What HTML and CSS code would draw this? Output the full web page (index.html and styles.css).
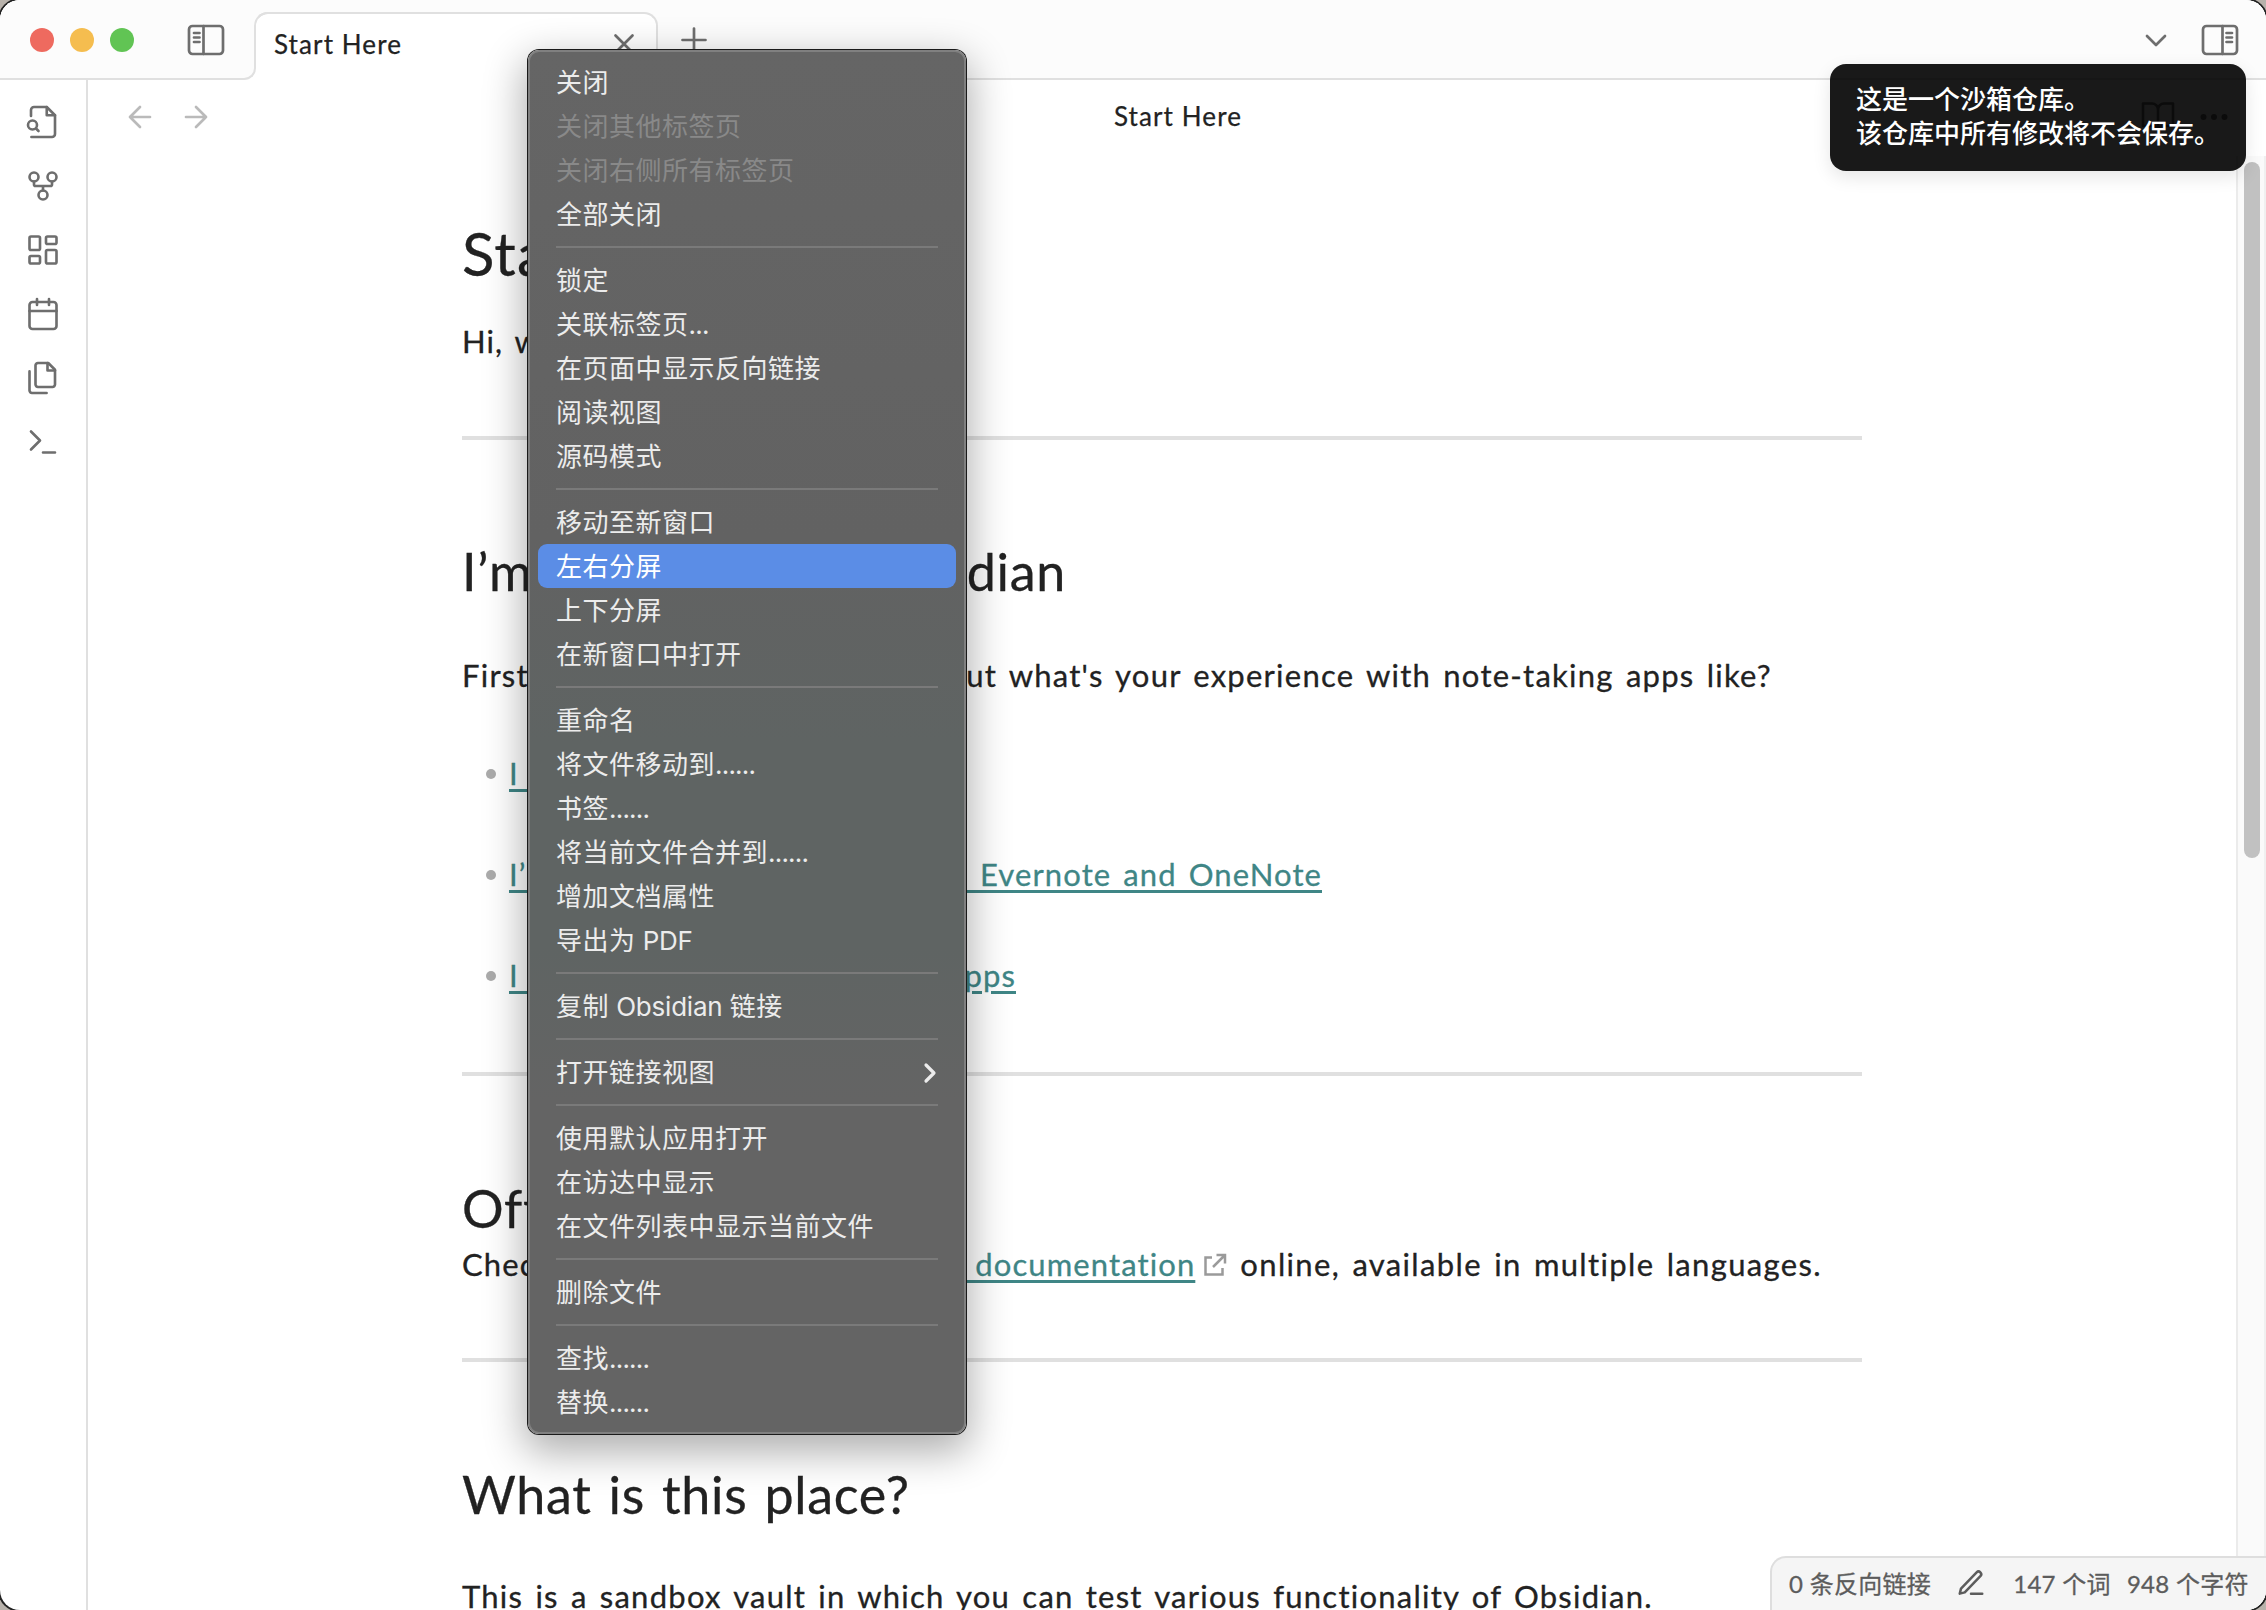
FILE: index.html
```html
<!DOCTYPE html>
<html lang="zh-CN">
<head>
<meta charset="utf-8">
<title>Start Here</title>
<link rel="stylesheet" href="styles.css">
</head>
<body>
<div class="window">
  <header class="titlebar">
    <div class="titlebar-left">
      <i class="light red"></i><i class="light yellow"></i><i class="light green"></i>
      <svg class="icon panel-left" width="40" height="34" viewBox="0 0 40 34"><rect x="3" y="3" width="34" height="28" rx="3.5"/><path d="M17.500 3v28M8 10h5.500M8 14.500h5.500M8 19h5.500"/></svg>
    </div>
    <div class="tab">
      <span class="tab-title">Start Here</span>
      <svg class="icon" width="24" height="24" viewBox="0 0 24 24"><path d="M3.500 3.500l17 17M20.500 3.500l-17 17"/></svg>
    </div>
    <div class="titlebar-right">
      <svg class="icon" width="28" height="28" viewBox="0 0 28 28"><path d="M14 2.500v23M2.500 14h23"/></svg>
      <span class="spacer"></span>
      <svg class="icon chevron" width="28" height="28" viewBox="0 0 28 28"><path d="M5 10l9 9 9-9"/></svg>
      <svg class="icon" width="40" height="34" viewBox="0 0 40 34"><rect x="3" y="3" width="34" height="28" rx="3.500"/><path d="M22.500 3v28M26.500 10h5.500M26.500 14.500h5.500M26.500 19h5.500"/></svg>
    </div>
  </header>
  <div class="main">
    <nav class="ribbon">
      <svg class="icon" width="36" height="36" viewBox="0 0 24 24"><path d="M14.500 2v5.500H20"/><path d="M4.270 22H18a2 2 0 0 0 2-2V7.500L14.500 2H6a2 2 0 0 0-2 2v4"/><circle cx="5" cy="14" r="3"/><path d="M9 18l-1.500-1.500"/></svg>
      <svg class="icon" width="36" height="36" viewBox="0 0 24 24"><circle cx="12" cy="18" r="3"/><circle cx="6" cy="6" r="3"/><circle cx="18" cy="6" r="3"/><path d="M18 9v2c0 .6-.4 1-1 1H7c-.6 0-1-.4-1-1V9M12 12v3"/></svg>
      <svg class="icon" width="36" height="36" viewBox="0 0 24 24"><rect width="7" height="9" x="3" y="3" rx="1"/><rect width="7" height="5" x="14" y="3" rx="1"/><rect width="7" height="9" x="14" y="12" rx="1"/><rect width="7" height="5" x="3" y="16" rx="1"/></svg>
      <svg class="icon" width="36" height="36" viewBox="0 0 24 24"><rect width="18" height="18" x="3" y="4" rx="2"/><path d="M16 2v4M8 2v4M3 10h18"/></svg>
      <svg class="icon" width="36" height="36" viewBox="0 0 24 24"><path d="M15.500 2H8.600c-.4 0-.8.2-1.100.5-.3.3-.5.7-.5 1.100v12.800c0 .4.2.8.5 1.100.3.3.7.5 1.100.5h9.800c.4 0 .8-.2 1.100-.5.3-.3.5-.7.5-1.100V6.500L15.500 2z"/><path d="M3 7.600v12.800c0 .4.2.8.5 1.100.3.3.7.5 1.100.5h9.800M15 2v5h5"/></svg>
      <svg class="icon" width="36" height="36" viewBox="0 0 24 24"><path d="M4 17l6-6-6-6M12 19h8"/></svg>
    </nav>
    <section class="view">
      <div class="view-header">
        <div class="view-nav">
          <svg class="icon" width="28" height="28" viewBox="0 0 28 28"><path d="M24 14H4M14 4L4 14l10 10"/></svg>
          <svg class="icon" width="28" height="28" viewBox="0 0 28 28"><path d="M4 14h20M14 4l10 10-10 10"/></svg>
        </div>
        <span class="view-title">Start Here</span>
        <div class="view-actions">
          <svg class="icon" width="36" height="36" viewBox="0 0 24 24"><path d="M2 3h6a4 4 0 0 1 4 4v14a3 3 0 0 0-3-3H2zM22 3h-6a4 4 0 0 0-4 4v14a3 3 0 0 1 3-3h7z"/></svg>
          <svg class="icon dots" width="36" height="36" viewBox="0 0 24 24"><circle cx="5" cy="12" r="1"/><circle cx="12" cy="12" r="1"/><circle cx="19" cy="12" r="1"/></svg>
        </div>
      </div>
      <div class="scroller">
        <article class="note">
          <h1>Start</h1>
          <p class="greeting">Hi, we</p>
          <hr>
          <h2 class="row w-interest"><span>I’m</span><span>Obsidian</span></h2>
          <p class="row w-first"><span>First</span><span>but what's your experience with note-taking apps like?</span></p>
          <ul>
            <li><a class="row w-one"><span>I have</span></a></li>
            <li><a class="row w-two"><span>I’m</span><span>like Evernote and OneNote</span></a></li>
            <li><a class="row w-three"><span>I have</span><span>apps</span></a></li>
          </ul>
          <hr>
          <h2 class="official">Offi</h2>
          <p class="row w-check"><span>Check</span><span class="docs"><a>the documentation</a><svg class="ext" width="26" height="26" viewBox="0 0 26 26"><path d="M10 5.500H3.500v17h17V16M14.500 3h8.500v8.500M23 3L11 15"/></svg><span class="after-link">online, available in multiple languages.</span></span></p>
          <hr>
          <h2 class="place">What is this place?</h2>
          <p class="sandbox">This is a sandbox vault in which you can test various functionality of Obsidian.</p>
        </article>
        <div class="scrollbar"><div class="thumb"></div></div>
      </div>
    </section>
  </div>

  <footer class="status">
    <span class="s-links">0 条反向链接</span>
    <svg class="icon" width="30" height="30" viewBox="0 0 24 24"><path d="M12 20.500h9M16.500 3.500a2.120 2.120 0 0 1 3 3L7 19.500l-4 1 1-4z"/></svg>
    <span class="s-words">147 个词</span>
    <span class="s-chars">948 个字符</span>
  </footer>

  <div class="notice">这是一个沙箱仓库。<br>该仓库中所有修改将不会保存。</div>

  <ul class="menu">
    <li>关闭</li>
    <li class="disabled">关闭其他标签页</li>
    <li class="disabled">关闭右侧所有标签页</li>
    <li>全部关闭</li>
    <li class="sep"></li>
    <li>锁定</li>
    <li><span>关联标签页<span class="ellipsis">...</span></span></li>
    <li>在页面中显示反向链接</li>
    <li>阅读视图</li>
    <li>源码模式</li>
    <li class="sep"></li>
    <li>移动至新窗口</li>
    <li class="active">左右分屏</li>
    <li>上下分屏</li>
    <li>在新窗口中打开</li>
    <li class="sep"></li>
    <li>重命名</li>
    <li><span>将文件移动到<span class="ellipsis">......</span></span></li>
    <li><span>书签<span class="ellipsis">......</span></span></li>
    <li><span>将当前文件合并到<span class="ellipsis">......</span></span></li>
    <li>增加文档属性</li>
    <li><span>导出为<span class="latin"> PDF</span></span></li>
    <li class="sep"></li>
    <li><span>复制<span class="latin"> Obsidian </span>链接</span></li>
    <li class="sep"></li>
    <li>打开链接视图<svg width="16" height="24" viewBox="0 0 16 24"><path d="M4 4l8 8-8 8"/></svg></li>
    <li class="sep"></li>
    <li>使用默认应用打开</li>
    <li>在访达中显示</li>
    <li>在文件列表中显示当前文件</li>
    <li class="sep"></li>
    <li>删除文件</li>
    <li class="sep"></li>
    <li><span>查找<span class="ellipsis">......</span></span></li>
    <li><span>替换<span class="ellipsis">......</span></span></li>
  </ul>
</div>
</body>
</html>
```
FILE: styles.css
```css
* { box-sizing: border-box; }
html, body { margin: 0; height: 100%; overflow: hidden; background: #b8b2ab; }
body { font-family: Lato, "Noto Sans CJK SC", sans-serif; color: #222; }
ul, h1, h2, p { margin: 0; padding: 0; list-style: none; font-weight: 400; }

.window {
  position: relative;
  width: 2266px;
  height: 1610px;
  display: flex;
  flex-direction: column;
  background: #fff;
  border-radius: 20px;
  box-shadow: 0 0 0 2px #222;
  overflow: hidden;
}
.icon { flex: none; fill: none; stroke: #6e6e6e; stroke-width: 2.7; stroke-linecap: round; stroke-linejoin: round; }

/* title bar and tab strip */
.titlebar { display: flex; height: 80px; flex: none; background: linear-gradient(#fcfcfc 50px, #fff 50px); }
.titlebar-left {
  position: relative;
  width: 256px;
  display: flex;
  align-items: center;
  padding: 2px 0 0 30px;
  background: #fcfcfc;
  border-bottom: 2px solid #e0e0e0;
  border-right: 2px solid #e0e0e0;
  border-bottom-right-radius: 12px;
}
/* the divider only starts where the tab's rounded corner ends */
.titlebar-left::after { content: ""; position: absolute; top: 0; right: -2px; width: 2px; height: 26px; background: #fcfcfc; }
.light { width: 24px; height: 24px; margin-right: 16px; border-radius: 50%; }
.red { background: #ee6a5f; }
.yellow { background: #f5bd4f; }
.green { background: #61c454; }
.panel-left { margin-left: 36px; }
.tab {
  position: relative;
  width: 404px;
  height: 68px;
  margin: 12px 0 0 -2px;
  padding: 0 20px 6px 18px;
  display: flex;
  align-items: center;
  justify-content: space-between;
  background: #fff;
  background-clip: padding-box;
  border: 2px solid #e0e0e0;
  border-bottom: 0;
  border-left-color: transparent;
  border-radius: 14px 14px 0 0;
}
.tab::before {
  content: "";
  position: absolute;
  left: -2px;
  top: -2px;
  width: 16px;
  height: 30px;
  border: 2px solid #e0e0e0;
  border-width: 2px 0 0 2px;
  border-top-left-radius: 14px;
}
.tab-title, .view-title { font-size: 26px; line-height: 36px; letter-spacing: 1.1px; -webkit-text-stroke: .25px; }
.titlebar-right {
  flex: 1;
  display: flex;
  align-items: center;
  padding: 2px 26px 0 22px;
  background: #fcfcfc;
  border-bottom: 2px solid #e0e0e0;
}
.titlebar-right .spacer { flex: 1; }
.chevron { margin-right: 30px; }

.main { flex: 1; min-height: 0; display: flex; }
.ribbon {
  width: 88px;
  flex: none;
  display: flex;
  flex-direction: column;
  align-items: center;
  gap: 28px;
  padding: 24px 0 0 0;
  border-right: 2px solid #e0e0e0;
}
.ribbon .icon, .view-actions .icon { stroke-width: 1.75; }
.view { flex: 1; min-width: 0; display: flex; flex-direction: column; }
.view-header {
  height: 76px;
  flex: none;
  display: grid;
  grid-template-columns: 1fr auto 1fr;
  align-items: center;
  padding: 0 36px 3px 38px;
}
.view-title { padding-bottom: 2px; }
.view-nav { display: flex; gap: 28px; }
.view-nav .icon { stroke: #bababa; }
.view-actions { display: flex; gap: 20px; justify-content: flex-end; margin-right: -2px; }
.view-actions .dots circle { stroke-width: 2; }

/* note body */
.scroller { flex: 1; min-height: 0; display: flex; justify-content: space-between; }
.note { width: 1400px; margin-left: 374px; padding-top: 61px; font-size: 31px; line-height: 48px; white-space: nowrap; letter-spacing: 1.1px; word-spacing: 3px; -webkit-text-stroke: .3px; }
.row { display: flex; justify-content: space-between; }
h1 { font-size: 60px; line-height: 72px; }
h2 { font-size: 52px; line-height: 64px; letter-spacing: .7px; }
.greeting { margin-top: 28px; }
hr { height: 4px; margin: 0; border: 0; background: #e0e0e0; }
.greeting + hr { margin-top: 71px; }
.w-interest { width: 604px; margin-top: 99px; }
.w-first { width: 1310px; margin-top: 48px; letter-spacing: 1.25px; }
.note ul { margin: 50px 0 73px; display: flex; flex-direction: column; gap: 53px; }
.note li { display: flex; align-items: center; padding-left: 24px; height: 48px; }
.note li::before { content: ""; width: 10px; height: 10px; margin: 2px 13px 0 0; border-radius: 50%; background: #ababab; }
.note a { color: #3f8686; text-decoration: underline; text-decoration-thickness: 3px; text-underline-offset: 4px; }
.w-one { width: 200px; }
.w-two { width: 813px; }
.w-three { width: 507px; }
.official { margin-top: 100px; }
.w-check { width: 1360px; margin: 0 0 70px; }
.docs { display: flex; }
.ext { margin: 12px 12px 0 7px; fill: none; stroke: #9a9a9a; stroke-width: 2.5; }
.after-link { letter-spacing: 1.35px; }
.place { margin-top: 100px; }
.sandbox { margin-top: 46px; letter-spacing: 1.25px; }

.scrollbar { width: 30px; padding: 6px 4px 0 6px; background: #fafafa; border-left: 2px solid #ebebeb; border-right: 2px solid #f0f0f0; }
.thumb { width: 16px; height: 696px; border-radius: 8px; background: #c1c1c1; }

/* overlays */
.status {
  position: absolute;
  right: 0;
  bottom: 0;
  width: 496px;
  height: 54px;
  display: flex;
  align-items: center;
  padding: 0 0 4px 17px;
  font-size: 24px;
  letter-spacing: .3px;
  color: #5c5c5c;
  background: #f5f5f5;
  border: 2px solid #dedede;
  border-width: 2px 0 0 2px;
  border-top-left-radius: 16px;
  white-space: nowrap;
  -webkit-text-stroke: .3px;
}
.status .icon { stroke: #5c5c5c; stroke-width: 2; margin: 2px 27px 0 25px; }
.s-words { margin-right: 16px; }
.notice {
  position: absolute;
  left: 1830px;
  top: 64px;
  width: 416px;
  height: 107px;
  padding: 19px 26px;
  border-radius: 16px;
  background: rgba(0, 0, 0, .9);
  color: #fff;
  font-size: 26px;
  font-weight: 500;
  line-height: 33.5px;
  white-space: nowrap;
  box-shadow: 0 6px 18px rgba(0, 0, 0, .1);
}
.menu {
  position: absolute;
  left: 528px;
  top: 50px;
  width: 438px;
  height: 1384px;
  padding: 8px;
  border: 2px solid #808080;
  border-radius: 11px;
  background: linear-gradient(#656565 0, #626262 35%, #5f6463 50%, #5f6463 65%, #646464 76%, #646464 100%);
  box-shadow: 0 0 0 1px #1a1a1a, 0 14px 40px 4px rgba(0, 0, 0, .32);
  font: 400 26px/42px Inter, "Noto Sans CJK SC", sans-serif;
  letter-spacing: .5px;
  color: #ececec;
  white-space: nowrap;
}
.menu li { height: 44px; padding: 2px 18px 0; display: flex; align-items: center; justify-content: space-between; border-radius: 9px; white-space: pre; }
.menu .ellipsis { letter-spacing: -.8px; }
.menu .latin { letter-spacing: -.2px; }
.menu .disabled { color: #898989; }
.menu .active { background: #5b8de6; color: #fff; }
.menu .sep { height: 22px; padding-top: 0; }
.menu .sep::before { content: ""; flex: 1; height: 2px; background: #7a7a7a; }
.menu svg { fill: none; stroke: #ececec; stroke-width: 3.2; stroke-linecap: round; stroke-linejoin: round; }
```
